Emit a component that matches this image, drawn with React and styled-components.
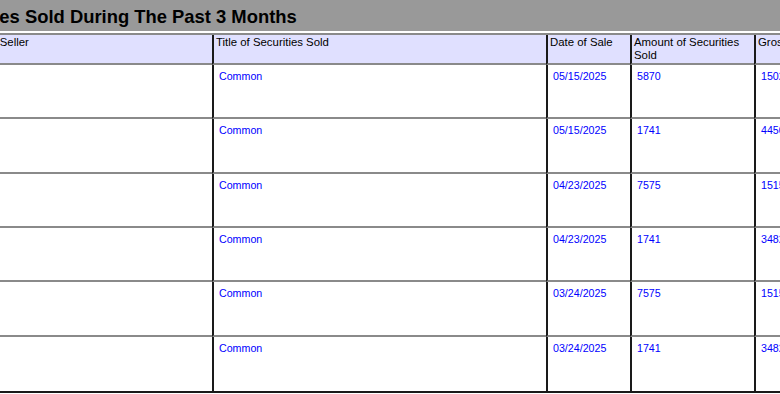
import styled, { createGlobalStyle } from "styled-components";

const GlobalStyle = createGlobalStyle`
  body {
    margin: 0;
    overflow: hidden;
    background: #fff;
    font-family: "Liberation Sans", Arial, sans-serif;
  }
`;

// the reference is scrolled sideways, so the page starts left of the window
const Page = styled.div`
  width: 1040px;
  margin-left: -115px;
`;

const SectionTitle = styled.h2`
  margin: 0 0 2px;
  height: 31px;
  box-sizing: border-box;
  padding: 2px 5px 0;
  display: flex;
  align-items: center;
  background: #999;
  color: #000;
  font-size: 18.4px;
  font-weight: bold;
`;

const Table = styled.table`
  table-layout: fixed;
  width: 1019px;
  border-collapse: separate;
  border-spacing: 0;
  border-top: 2px solid #8a8a8a;
  border-bottom: 2px solid #1a1a1a;
`;

const HeadCell = styled.th`
  background: #e0e0ff;
  border-left: ${({ $first }) => ($first ? "none" : "2px solid #1a1a1a")};
  border-bottom: 2px solid #8a8a8a;
  padding: 1px 2px;
  height: 26px;
  vertical-align: top;
  text-align: left;
  font-weight: normal;
  font-size: 11.4px;
  line-height: 13px;
  color: #000;
`;

const Cell = styled.td`
  border-left: ${({ $first }) => ($first ? "none" : "2px solid #1a1a1a")};
  border-bottom: ${({ $last }) => ($last ? "none" : "2px solid #8a8a8a")};
  padding: 5px 5px;
  height: ${({ $last }) => ($last ? "44.33px" : "42.33px")};
  vertical-align: top;
  font-size: 10.67px;
  line-height: 13px;
  color: #00f;
  white-space: nowrap;
  overflow: hidden;
`;

const columns = [
  { label: "Name and Address of Seller", width: 327 },
  { label: "Title of Securities Sold", width: 334 },
  { label: "Date of Sale", width: 84 },
  { label: "Amount of Securities Sold", width: 124 },
  { label: "Gross Proceeds", width: 150 },
];

const sales = [
  { seller: "", title: "Common", date: "05/15/2025", amount: "5870", gross: "150272.65" },
  { seller: "", title: "Common", date: "05/15/2025", amount: "1741", gross: "44506.27" },
  { seller: "", title: "Common", date: "04/23/2025", amount: "7575", gross: "151500.00" },
  { seller: "", title: "Common", date: "04/23/2025", amount: "1741", gross: "34820.00" },
  { seller: "", title: "Common", date: "03/24/2025", amount: "7575", gross: "151500.00" },
  { seller: "", title: "Common", date: "03/24/2025", amount: "1741", gross: "34820.00" },
];

export default function App() {
  return (
    <>
      <GlobalStyle />
      <Page>
        <SectionTitle>144: Securities Sold During The Past 3 Months</SectionTitle>
        <Table>
          <colgroup>
            {columns.map((c) => (
              <col key={c.label} style={{ width: c.width }} />
            ))}
          </colgroup>
          <thead>
            <tr>
              {columns.map((c, i) => (
                <HeadCell key={c.label} $first={i === 0}>
                  {c.label}
                </HeadCell>
              ))}
            </tr>
          </thead>
          <tbody>
            {sales.map((s, i) => {
              const last = i === sales.length - 1;
              return (
                <tr key={i}>
                  <Cell $first $last={last}>{s.seller}</Cell>
                  <Cell $last={last}>{s.title}</Cell>
                  <Cell $last={last}>{s.date}</Cell>
                  <Cell $last={last}>{s.amount}</Cell>
                  <Cell $last={last}>{s.gross}</Cell>
                </tr>
              );
            })}
          </tbody>
        </Table>
      </Page>
    </>
  );
}
